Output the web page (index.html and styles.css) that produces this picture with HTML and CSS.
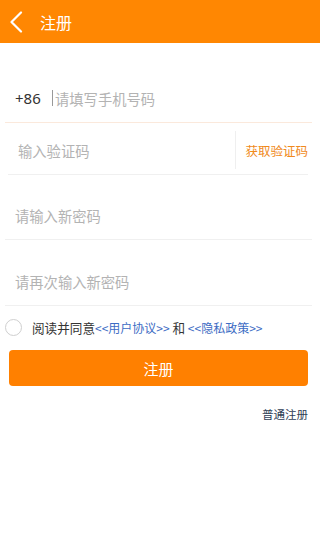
FILE: index.html
```html
<!DOCTYPE html>
<html lang="zh-CN">
<head>
    <meta charset="UTF-8">
    <meta name="viewport" content="width=device-width, initial-scale=1.0">
    <title>注册</title>
    <link rel="stylesheet" href="styles.css">
</head>
<body>
    <div class="top-bar">
        <a class="back" href="#">
            <svg width="16" height="22" viewBox="0 0 16 22"><path d="M12 1.5 L2.5 11 L12 20.5" fill="none" stroke="#fff" stroke-width="2.2" stroke-linecap="round" stroke-linejoin="round"/></svg>
        </a>
        <span class="title">注册</span>
    </div>

    <div class="reg-form">
        <div class="row row-phone">
            <span class="prefix">+86</span>
            <span class="caret"></span>
            <input class="field" type="text" placeholder="请填写手机号码">
        </div>
        <div class="row row-code">
            <input class="field" type="text" placeholder="输入验证码">
            <a class="get-code" href="#">获取验证码</a>
        </div>
        <div class="row row-pwd">
            <input class="field" type="password" placeholder="请输入新密码">
        </div>
        <div class="row row-pwd2">
            <input class="field" type="password" placeholder="请再次输入新密码">
        </div>

        <div class="agree">
            <span class="radio"></span>
            <span class="agree-text">阅读并同意<a href="#">&lt;&lt;用户协议&gt;&gt;</a> 和 <a href="#">&lt;&lt;隐私政策&gt;&gt;</a></span>
        </div>

        <button type="button" class="submit">注册</button>

        <div class="alt-link"><a href="#">普通注册</a></div>
    </div>
</body>
</html>
```

FILE: styles.css
```css
* {
    box-sizing: border-box;
}
body {
    margin: 0;
    background-color: #fff;
    font-family: "Noto Sans CJK SC", "Noto Sans", sans-serif;
    color: #333;
}
a {
    text-decoration: none;
}

.top-bar {
    display: flex;
    align-items: center;
    height: 43px;
    background-color: #ff8702;
    color: #fff;
}
.top-bar .back {
    display: flex;
    width: 40px;
    padding-left: 9px;
}
.top-bar .title {
    font-size: 16px;
    line-height: 1;
}

.reg-form {
    padding: 0 8px 0 5px;
}
.row {
    display: flex;
    align-items: center;
    height: 49px;
    padding-left: 10px;
    border-bottom: 1px solid #f0f0f0;
}
.row .field {
    flex: 1;
    min-width: 0;
    border: none;
    outline: none;
    padding: 0;
    font-family: inherit;
    font-size: 14.3px;
    color: #333;
    background: transparent;
}
.row .field::placeholder {
    color: #b3b3b3;
}
.row-phone {
    margin-top: 31px;
    border-bottom-color: #fbe9dc;
}
.row-phone .prefix {
    font-family: "Noto Sans", sans-serif;
    font-size: 15px;
    color: #333;
    width: 37px;
}
.row-phone .caret {
    width: 1px;
    height: 16px;
    background-color: #999;
    margin-right: 2px;
}
.row-code {
    margin: 3px 4px 0 3px;
    padding-left: 10px;
}
.row-code .get-code {
    display: flex;
    align-items: center;
    height: 38px;
    padding-left: 9px;
    border-left: 1px solid #efefef;
    font-size: 12.5px;
    color: #f08a1c;
}
.row-pwd {
    margin-top: 16px;
}
.row-pwd2 {
    margin-top: 17px;
}

.agree {
    display: flex;
    align-items: center;
    margin-top: 12px;
    height: 18px;
}
.agree .radio {
    width: 17px;
    height: 17px;
    border: 1px solid #cfcfcf;
    border-radius: 50%;
}
.agree .agree-text {
    margin-left: 10px;
    font-size: 12.6px;
    color: #333;
}
.agree .agree-text a {
    font-size: 12px;
    color: #3d6cc4;
}

.submit {
    display: block;
    width: calc(100% - 8px);
    height: 36px;
    margin: 14px 4px 0 4px;
    border: none;
    border-radius: 4px;
    background-color: #ff8000;
    color: #fff;
    font-family: inherit;
    font-size: 15px;
}

.alt-link {
    text-align: right;
    margin-top: 14px;
    padding-right: 4px;
}
.alt-link a {
    font-size: 11.5px;
    color: #2f3d55;
}
```
